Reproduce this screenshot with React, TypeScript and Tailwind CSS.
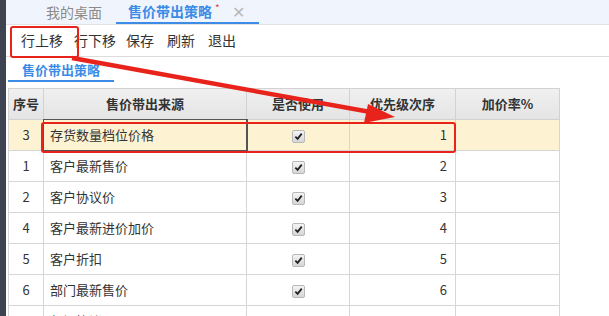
import React from 'react';

const FONT = { fontFamily: '"Microsoft YaHei", "Noto Sans CJK SC", "Liberation Sans", sans-serif' };

const rows = [
  { no: 3, name: '存货数量档位价格', order: 1, selected: true },
  { no: 1, name: '客户最新售价', order: 2 },
  { no: 2, name: '客户协议价', order: 3 },
  { no: 4, name: '客户最新进价加价', order: 4 },
  { no: 5, name: '客户折扣', order: 5 },
  { no: 6, name: '部门最新售价', order: 6 },
  { no: 7, name: '部门协议价', order: 7 },
];

function Check() {
  return (
    <span className="inline-flex w-[13px] h-[13px] items-center justify-center rounded-[2px] border border-[#b8b8b8] bg-gradient-to-b from-[#f4f4f4] to-[#d6d6d6] align-middle">
      <svg width="9" height="9" viewBox="0 0 10 10">
        <path d="M1.5 5.2 L4 7.6 L8.6 1.8" fill="none" stroke="#222" strokeWidth="2" />
      </svg>
    </span>
  );
}

export default function App() {
  return (
    <div className="relative w-[609px] h-[316px] overflow-hidden bg-white flex" style={FONT}>
      {/* left dark strip */}
      <div className="w-[6px] shrink-0 bg-[#3d4351]" />

      <div className="flex-1 flex flex-col min-w-0">
        {/* tab bar */}
        <div className="h-[25px] shrink-0 bg-[#f0f5fd] border-b border-[#e2e2e2] flex items-end pl-[34px]">
          <div className="h-full flex items-center px-[6px] text-[14px] text-[#8a8a8a]">我的桌面</div>
          <div className="ml-[8px] h-full flex items-center pl-[12px] pr-[14px] border-b-[2px] border-[#3c8ce7] text-[14px] font-bold text-[#3c8ce7]">
            售价带出策略
            <span className="text-[#e04848] text-[10px] ml-[3px] -mt-[8px] font-normal">*</span>
            <span className="ml-[12px] text-[#b8b8b8] font-normal text-[16px]">✕</span>
          </div>
        </div>

        {/* toolbar */}
        <div className="h-[32px] shrink-0 border-b border-[#dcdcdc] flex items-center gap-[0px] pl-[8px] text-[14px] text-[#333]">
          <span className="w-[56px] text-center">行上移</span>
          <span className="w-[50px] text-center">行下移</span>
          <span className="w-[40px] text-center">保存</span>
          <span className="w-[42px] text-center">刷新</span>
          <span className="w-[40px] text-center">退出</span>
        </div>

        {/* sub tab */}
        <div className="h-[31px] shrink-0 flex items-start pl-[2px] pt-[3px]">
          <div className="h-[22px] w-[106px] flex items-center justify-center border-b-[2px] border-[#3c8ce7] text-[13px] font-bold text-[#3c8ce7]">
            售价带出策略
          </div>
        </div>

        {/* grid */}
        <div className="pl-[2px]">
          <table className="border-collapse table-fixed text-[13px] text-[#333]">
            <colgroup>
              <col className="w-[35px]" />
              <col className="w-[203px]" />
              <col className="w-[103px]" />
              <col className="w-[106px]" />
              <col className="w-[104px]" />
            </colgroup>
            <thead>
              <tr className="h-[31px] bg-gradient-to-b from-[#f0f0f0] to-[#e4e4e4] font-bold text-[#333]">
                <th className="border border-[#d2d2d2] font-bold">序号</th>
                <th className="border border-[#d2d2d2] font-bold">售价带出来源</th>
                <th className="border border-[#d2d2d2] font-bold">是否使用</th>
                <th className="border border-[#d2d2d2] font-bold">优先级次序</th>
                <th className="border border-[#d2d2d2] font-bold">加价率%</th>
              </tr>
            </thead>
            <tbody>
              {rows.map((r) => (
                <tr key={r.no} className={`h-[31px] ${r.selected ? 'bg-[#fdf3d3]' : 'bg-white'}`}>
                  <td className="border border-[#d6d6d6] text-center">{r.no}</td>
                  <td className={`border px-[6px] ${r.selected ? 'border-[#555] outline outline-1 outline-[#555]' : 'border-[#d6d6d6]'}`}>{r.name}</td>
                  <td className="border border-[#d6d6d6] text-center"><Check /></td>
                  <td className="border border-[#d6d6d6] text-right pr-[8px]">{r.order}</td>
                  <td className="border border-[#d6d6d6]"></td>
                </tr>
              ))}
            </tbody>
          </table>
        </div>
      </div>

      {/* annotations */}
      <div className="absolute left-[10px] top-[26px] w-[69px] h-[32px] border-[2px] border-[#e8231c] rounded-[3px]" />
      <div className="absolute left-[41px] top-[122px] w-[415px] h-[31px] border-[2px] border-[#e8231c] rounded-[3px]" />
      <svg className="absolute left-0 top-0" width="609" height="316" viewBox="0 0 609 316">
        <line x1="72" y1="58" x2="376" y2="113" stroke="#e8231c" strokeWidth="4.5" />
        <polygon points="395,117 368,104 364,123" fill="#e8231c" />
      </svg>
    </div>
  );
}
